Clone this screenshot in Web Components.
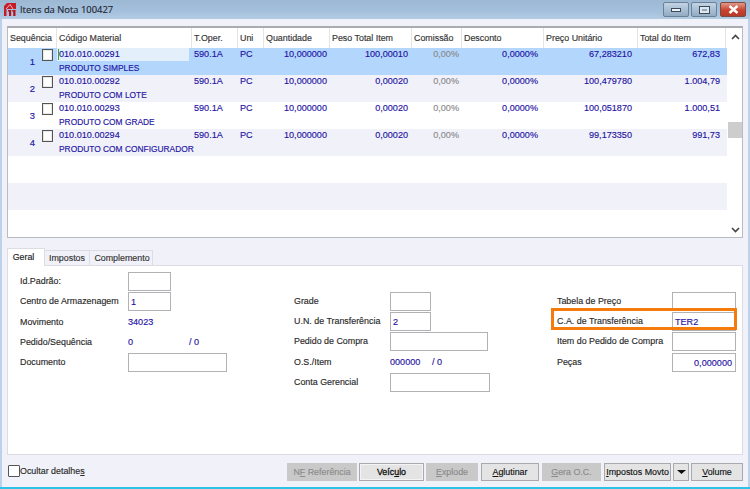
<!DOCTYPE html>
<html lang="pt"><head><meta charset="utf-8"><title>Itens da Nota</title>
<style>
html,body{margin:0;padding:0;width:750px;height:489px;overflow:hidden;background:#f1f2f9;font:8.9px "Liberation Sans",sans-serif;color:#222;-webkit-text-stroke:.15px currentColor}
</style></head><body>
<win-frame caption="Itens da Nota 100427">
  <data-grid>
    <grid-row n="1" code="010.010.00291" name="PRODUTO SIMPLES" peso="100,00010" preco="67,283210" total="672,83" selected></grid-row>
    <grid-row n="2" code="010.010.00292" name="PRODUTO COM LOTE" peso="0,00020" preco="100,479780" total="1.004,79" alt></grid-row>
    <grid-row n="3" code="010.010.00293" name="PRODUTO COM GRADE" peso="0,00020" preco="100,051870" total="1.000,51"></grid-row>
    <grid-row n="4" code="010.010.00294" name="PRODUTO COM CONFIGURADOR" peso="0,00020" preco="99,173350" total="991,73" alt></grid-row>
    <grid-row></grid-row>
    <grid-row alt></grid-row>
    <grid-row></grid-row>
  </data-grid>
  <tab-panel>
    <form-col slot="a">
      <form-field label="Id.Padrão:" w="43"></form-field>
      <form-field label="Centro de Armazenagem" w="43" value="1"></form-field>
      <form-field label="Movimento" text="34023"></form-field>
      <form-field label="Pedido/Sequência" text="0" extra="/ 0" gap="61"></form-field>
      <form-field label="Documento" w="99" late></form-field>
    </form-col>
    <form-col slot="b" start>
      <form-field label="Grade" w="41" lw="96"></form-field>
      <form-field label="U.N. de Transferência" w="41" lw="96" value="2"></form-field>
      <form-field label="Pedido de Compra" w="98" lw="96"></form-field>
      <form-field label="O.S./Item" text="000000" extra="/ 0" gap="42" lw="96"></form-field>
      <form-field label="Conta Gerencial" w="100" lw="96" late></form-field>
    </form-col>
    <form-col slot="c" start>
      <form-field label="Tabela de Preço" w="64" lw="115"></form-field>
      <form-field label="C.A. de Transferência" w="64" lw="115" value="TER2"></form-field>
      <form-field label="Item do Pedido de Compra" w="64" lw="115"></form-field>
      <form-field label="Peças" w="64" lw="115" value="0,000000" right late></form-field>
    </form-col>
  </tab-panel>
  <action-bar>
    <check-box slot="left">Ocultar detalhe<u>s</u></check-box>
    <act-button w="70" off>N<u>F</u> Referência</act-button>
    <act-button w="65" strong>Veíc<u>u</u>lo</act-button>
    <act-button w="52" off><u>E</u>xplode</act-button>
    <act-button w="58" style="margin-left:1px"><u>A</u>glutinar</act-button>
    <act-button w="59" style="margin-left:1px" off><u>G</u>era O.C.</act-button>
    <act-button w="67" style="margin-left:1px"><u>I</u>mpostos Movto</act-button>
    <act-button w="16" caret></act-button>
    <act-button w="52"><u>V</u>olume</act-button>
  </action-bar>
</win-frame>
<script>
const BLUE='#1f14a4';
const el=(c,tpl)=>customElements.define(c,class extends HTMLElement{
  connectedCallback(){ if(this.shadowRoot) return; this.attachShadow({mode:'open'}).innerHTML=tpl(this); }
});
const A=(h,n,d='')=>h.getAttribute(n)??d;

el('win-frame',h=>`<style>
:host{display:flex;flex-direction:column;width:750px;height:489px;box-sizing:border-box;border-bottom:2px solid #2cc3e6;position:relative}
.bar{height:19px;flex:none;background:linear-gradient(#9db8d3,#a5c0dc 60%,#b3cce4);display:flex;align-items:center;padding-left:4px}
.cap{margin-left:4px;font:9.4px "Open Sans",sans-serif;color:#1c2530;white-space:nowrap}
.ctl{margin-left:auto;display:flex;padding:2px 4px 0 0;height:15px;align-self:flex-start}
.b{height:15px;box-sizing:border-box;border:1px solid #6d8195;border-radius:2px;display:flex;align-items:center;justify-content:center;background:linear-gradient(#c3d4e5,#a9bfd4 50%,#93abc2)}
.close{background:linear-gradient(#e09a8a,#c8432f 55%,#b53a28);border-color:#7d4a42}
.body{flex:1;display:flex;flex-direction:column;border-left:2px solid #bcd2ea;border-right:2px solid #bcd2ea;padding:7px 5px 0;background:#f1f2f9;min-height:0}
</style>
<div class="bar">
 <svg width="12" height="13" viewBox="0 0 12 13"><path fill="#c41c28" d="M0 3 3 0h9v6H0z"/><path d="M2 6 6 1.500 9 6" fill="none" stroke="#f3b9bc" stroke-width="1"/><path fill="#c41c28" d="M0 6h2.500v7H0z"/><path fill="#b3141e" d="M5 7h2.200v6H5zM9.200 7H11.500v6H9.200z"/><path fill="#b3141e" d="M4 7h1.500v1.500H4zM8.200 7h1.500v1.500H8.200z"/></svg>
 <span class="cap">${A(h,'caption')}</span>
 <div class="ctl">
  <div class="b" style="width:26px;margin-right:2px"><svg width="10" height="4"><rect x=".5" y=".5" width="9" height="3" fill="#eef3f8" stroke="#3c4a58"/></svg></div>
  <div class="b" style="width:26px;margin-right:3px"><svg width="11" height="8"><rect x=".5" y=".5" width="10" height="7" fill="#dfe7ef" stroke="#3c4a58"/><rect x="3" y="3" width="5" height="2" fill="#93a5b6"/></svg></div>
  <div class="b close" style="width:26px"><svg width="11" height="9" viewBox="0 0 11 9"><path d="M1.500 1 9.500 8M9.500 1 1.500 8" stroke="#fff" stroke-width="2.400" fill="none"/></svg></div>
 </div>
</div>
<div class="body"><slot></slot></div>`);

const COLS='49px 135px 46px 26px 66px 82px 50px 82px 94px 88px';
el('data-grid',h=>`<style>
:host{display:flex;height:212px;box-sizing:border-box;border:1px solid #b9bbbf;border-top:2px solid #a9abaf;background:#fff;flex:none;--cols:${COLS}}
.main{width:719px;flex:none;overflow:hidden}
.head{display:grid;grid-template-columns:var(--cols);height:20px;background:#fff;align-items:center;color:#333}
.head span{height:100%;display:flex;align-items:center;padding-left:2px;box-sizing:border-box;border-right:1px solid #e4e4e6;white-space:nowrap;overflow:hidden}
.sb{margin-left:1px;width:14px;display:flex;flex-direction:column;align-items:center;background:#fff}
.th{width:14px;height:16px;background:#cdcdcd;margin-top:auto}
.sb svg{flex:none}
</style>
<div class="main"><div class="head"><span>Sequência</span><span>Código Material</span><span>T.Oper.</span><span>Uni</span><span>Quantidade</span><span>Peso Total Item</span><span>Comissão</span><span>Desconto</span><span>Preço Unitário</span><span>Total do Item</span></div><slot></slot></div>
<div class="sb"><svg width="9" height="6" style="margin-top:6px" viewBox="0 0 9 6"><path d="M1 5 4.500 1.500 8 5" stroke="#444" stroke-width="1.600" fill="none"/></svg>
<div class="th" style="margin-top:82px"></div>
<svg width="9" height="6" style="margin-top:auto;margin-bottom:4px" viewBox="0 0 9 6"><path d="M1 1 4.500 4.500 8 1" stroke="#444" stroke-width="1.600" fill="none"/></svg></div>`);

el('grid-row',h=>{
 const empty=!h.hasAttribute('n'),sel=h.hasAttribute('selected');
 return `<style>
:host{display:grid;grid-template-columns:var(--cols);height:27px;font-size:9.1px;background:${sel?'#b3d7fc':h.hasAttribute('alt')?'#f1f2f9':'#fff'};color:${BLUE}}
.c{height:13px;line-height:13px;white-space:nowrap;text-align:right}
.l{text-align:left;padding-left:2px}
.seq{grid-row:1/3;display:flex;align-items:flex-start;height:27px}
.num{width:27px;text-align:right;line-height:24px;margin-top:2px;font-size:9.4px}
.box{width:9px;height:10px;border:1px solid #555;background:#fff;margin:1px 0 0 7px;box-shadow:inset 0 0 0 1px #e8e8e8}
.code{position:relative;${sel?'background:#e3f0fc;margin-right:3px;':''}padding-left:2px;text-align:left}
.name{grid-column:2/5;text-align:left;padding-left:2px;margin-top:1px;font-size:8.4px}
.caret{position:absolute;left:1px;top:1px;width:1px;height:11px;background:#3a3}
</style>${empty?'':`<div class="seq"><span class="num">${A(h,'n')}</span><span class="box"></span></div>
<div class="c code">${sel?'<i class="caret"></i>':''}${A(h,'code')}</div><div class="c l">590.1A</div><div class="c l">PC</div>
<div class="c" style="padding-right:3px">10,000000</div><div class="c" style="padding-right:4px">${A(h,'peso')}</div>
<div class="c" style="padding-right:3px;color:#8a8a8e">0,00%</div><div class="c" style="padding-right:6px">0,0000%</div>
<div class="c" style="padding-right:6px">${A(h,'preco')}</div><div class="c" style="padding-right:6px">${A(h,'total')}</div>
<div class="c name" style="grid-row:2">${A(h,'name')}</div>`}`;
});

el('tab-panel',h=>`<style>
:host{display:block;flex:none;margin-top:10px;position:relative}
.tabs{display:flex;height:17px;align-items:flex-end;position:relative;z-index:1}
.t{height:15px;box-sizing:border-box;border:1px solid #dcdde2;border-bottom:0;border-left:0;background:#f1f2f9;display:flex;align-items:center;justify-content:center;color:#333}
.on{height:18px;margin-bottom:-1px;background:#fff;border:1px solid #dcdde2;border-bottom:0;align-items:flex-start;padding:3px 5px 0 0;color:#222}
.pane{height:190px;box-sizing:border-box;border:1px solid #dcdde2;background:#fff;position:relative;display:flex}
.a{width:286px;flex:none;padding-left:12px;box-sizing:border-box}.b{width:263px;flex:none}.c{flex:1}
.mark{position:absolute;left:543px;top:42px;width:186px;height:22px;box-sizing:border-box;border:3px solid #f57c0c}
</style>
<div class="tabs"><div class="t on" style="width:38px">Geral</div><div class="t" style="width:45px">Impostos</div><div class="t" style="width:63px;padding-left:2px">Complemento</div></div>
<div class="pane"><div class="a"><slot name="a"></slot></div><div class="b"><slot name="b"></slot></div><div class="c"><slot name="c"></slot></div><div class="mark"></div></div>`);

el('form-col',h=>`<style>:host{display:flex;flex-direction:column;padding-top:${h.hasAttribute('start')?26:6}px}</style><slot></slot>`);

el('form-field',h=>{
 const w=A(h,'w'),v=A(h,'value'),txt=A(h,'text'),ex=A(h,'extra');
 const lh=w?18:20;
 return `<style>
:host{display:flex;align-items:flex-start;height:20px;${h.hasAttribute('late')?'margin-top:1px;':''}color:#2a2a2a}
.lab{width:${A(h,'lw','108')}px;flex:none;line-height:${lh}px;white-space:nowrap}
.in{height:19px;box-sizing:border-box;border:1px solid #b2b2b6;background:#fff;color:${BLUE};line-height:18px;padding:0 3px 0 2px;font-size:9.1px;white-space:nowrap;${h.hasAttribute('right')?'text-align:right;':''}}
.tx{color:${BLUE};line-height:${lh}px;font-size:9.1px;white-space:nowrap}
</style><span class="lab">${A(h,'label')}</span>${w?`<div class="in" style="width:${w}px">${v}</div>`:`<span class="tx" style="${ex?`width:${A(h,'gap')}px`:''}">${txt}</span>${ex?`<span class="tx">${ex}</span>`:''}`}`;
});

el('action-bar',h=>`<style>
:host{display:flex;align-items:center;height:18px;margin-top:8px;flex:none;gap:2px;padding-right:0}
.l{margin-right:auto;margin-left:1px}
</style><div class="l"><slot name="left"></slot></div><slot></slot>`);

el('check-box',h=>`<style>
:host{display:inline-flex;align-items:center;color:#2a2a2a}
i{width:10px;height:10px;border:1px solid #555;border-radius:1px;margin-right:0;background:#fff;display:block}
</style><i></i><span><slot></slot></span>`);

el('act-button',h=>{
 const off=h.hasAttribute('off');
 return `<style>
:host{display:flex;align-items:center;justify-content:center;box-sizing:border-box;width:${A(h,'w')}px;height:18px;border:1px solid ${off?'#c9c9c9':'#a9a9ab'};background:${off?'#c9c9c9':'#e4e4e5'};color:${off?'#8b8b8b':'#111'};font-size:8.9px;white-space:nowrap;${h.hasAttribute('strong')?'box-shadow:inset 0 0 0 1px #f4f4f4;-webkit-text-stroke:.3px #111;':''}}
svg{display:block}
</style>${h.hasAttribute('caret')?'<svg width="9" height="4" viewBox="0 0 9 4"><path d="M0 0h9L4.500 4z" fill="#111"/></svg>':'<span><slot></slot></span>'}`;
});
</script>
</body></html>
